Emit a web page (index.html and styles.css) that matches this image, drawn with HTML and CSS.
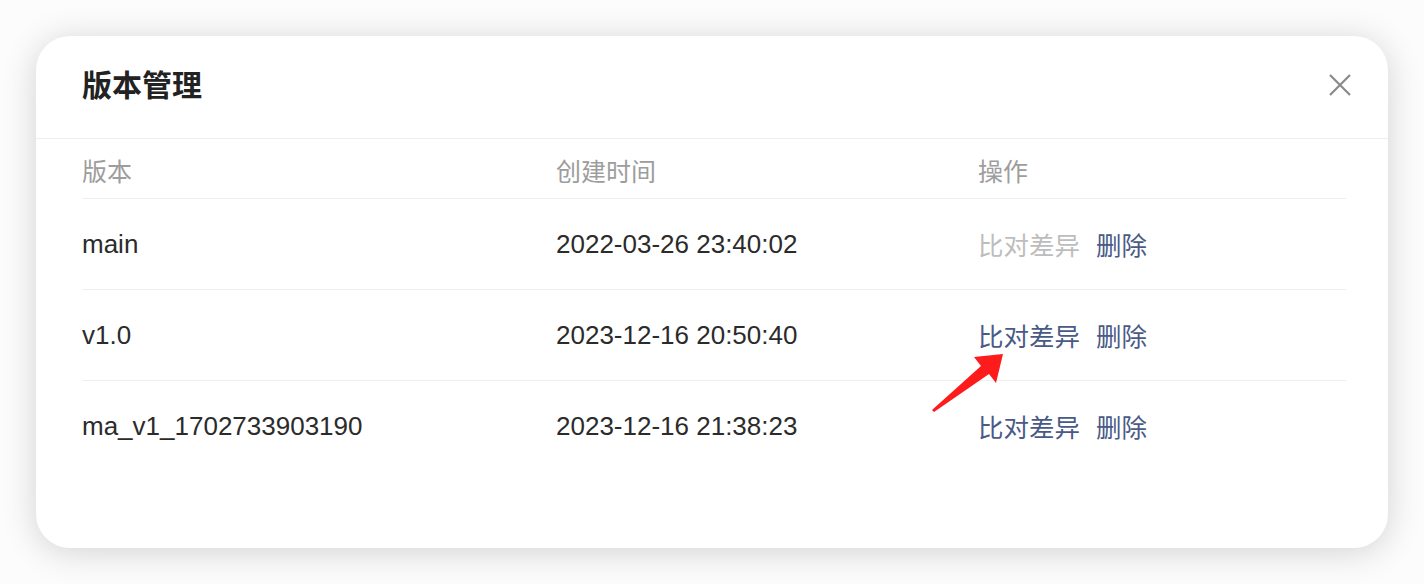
FILE: index.html
```html
<!DOCTYPE html>
<html lang="zh-CN">
<head>
<meta charset="utf-8">
<title>版本管理</title>
<link rel="stylesheet" href="styles.css">
</head>
<body>
<div class="stage">
  <div class="modal">
    <div class="modal-header">
      <div class="modal-title">版本管理</div>
      <button class="close" aria-label="关闭">
        <svg width="22" height="22" viewBox="0 0 22 22"><path d="M1 1 L21 21 M21 1 L1 21" stroke="#8a8a8a" stroke-width="2.2" fill="none"/></svg>
      </button>
    </div>
    <div class="modal-body">
      <div class="table">
        <div class="row head">
          <div class="cell">版本</div>
          <div class="cell">创建时间</div>
          <div class="cell">操作</div>
        </div>
        <div class="row">
          <div class="cell">main</div>
          <div class="cell">2022-03-26 23:40:02</div>
          <div class="cell actions"><span class="link disabled">比对差异</span><span class="link">删除</span></div>
        </div>
        <div class="row">
          <div class="cell">v1.0</div>
          <div class="cell">2023-12-16 20:50:40</div>
          <div class="cell actions"><span class="link">比对差异</span><span class="link">删除</span></div>
        </div>
        <div class="row last">
          <div class="cell">ma_v1_1702733903190</div>
          <div class="cell">2023-12-16 21:38:23</div>
          <div class="cell actions"><span class="link">比对差异</span><span class="link">删除</span></div>
        </div>
      </div>
    </div>
  </div>
  <svg class="arrow" width="1424" height="584" viewBox="0 0 1424 584">
    <polygon points="1003,354 974,357 981,366 932,410 934,412 989,374 996,383" fill="#fe1b1b"/>
  </svg>
</div>
</body>
</html>
```

FILE: styles.css
```css
* { box-sizing: border-box; }
html, body { margin: 0; padding: 0; }
body {
  background: #fcfcfc;
  font-family: "Liberation Sans", "Noto Sans CJK SC", sans-serif;
  width: 1424px;
  height: 584px;
  overflow: hidden;
}
.stage {
  position: relative;
  width: 1424px;
  height: 584px;
  padding: 36px 36px 0 36px;
}
.modal {
  width: 1352px;
  height: 512px;
  background: #fff;
  border-radius: 34px;
  box-shadow: 0 4px 34px rgba(0, 0, 0, 0.17);
  overflow: hidden;
}
.modal-header {
  height: 103px;
  border-bottom: 1px solid #eeeeee;
  display: flex;
  align-items: center;
  justify-content: space-between;
  padding: 0 37px 8px 46px;
}
.modal-title {
  font-family: "Noto Sans CJK SC", sans-serif;
  font-size: 30px;
  font-weight: 700;
  color: #222;
  line-height: 1;
}
.close {
  border: 0;
  background: transparent;
  padding: 0;
  width: 22px;
  height: 22px;
  display: flex;
  margin-top: 3px;
}
.modal-body {
  padding: 0 42px 0 46px;
}
.row {
  display: grid;
  grid-template-columns: 474px 422px 1fr;
  align-items: center;
  height: 91px;
  border-bottom: 1px solid #efefef;
  font-size: 26px;
  color: #2b2b2b;
  padding-top: 2px;
}
.row.head {
  height: 60px;
  color: #9d9d9d;
  font-family: "Noto Sans CJK SC", sans-serif;
  font-size: 25px;
  padding-top: 2px;
}
.row.last { border-bottom: 0; height: 90px; }
.cell { line-height: 1.2; white-space: nowrap; }
.actions {
  display: flex;
  gap: 16px;
  font-family: "Noto Sans CJK SC", sans-serif;
  font-size: 25.5px;
  margin-top: -2px;
}
.link { color: #4a5a86; }
.link.disabled { color: #bdbdbd; }
.arrow {
  position: absolute;
  left: 0;
  top: 0;
  pointer-events: none;
}
```
